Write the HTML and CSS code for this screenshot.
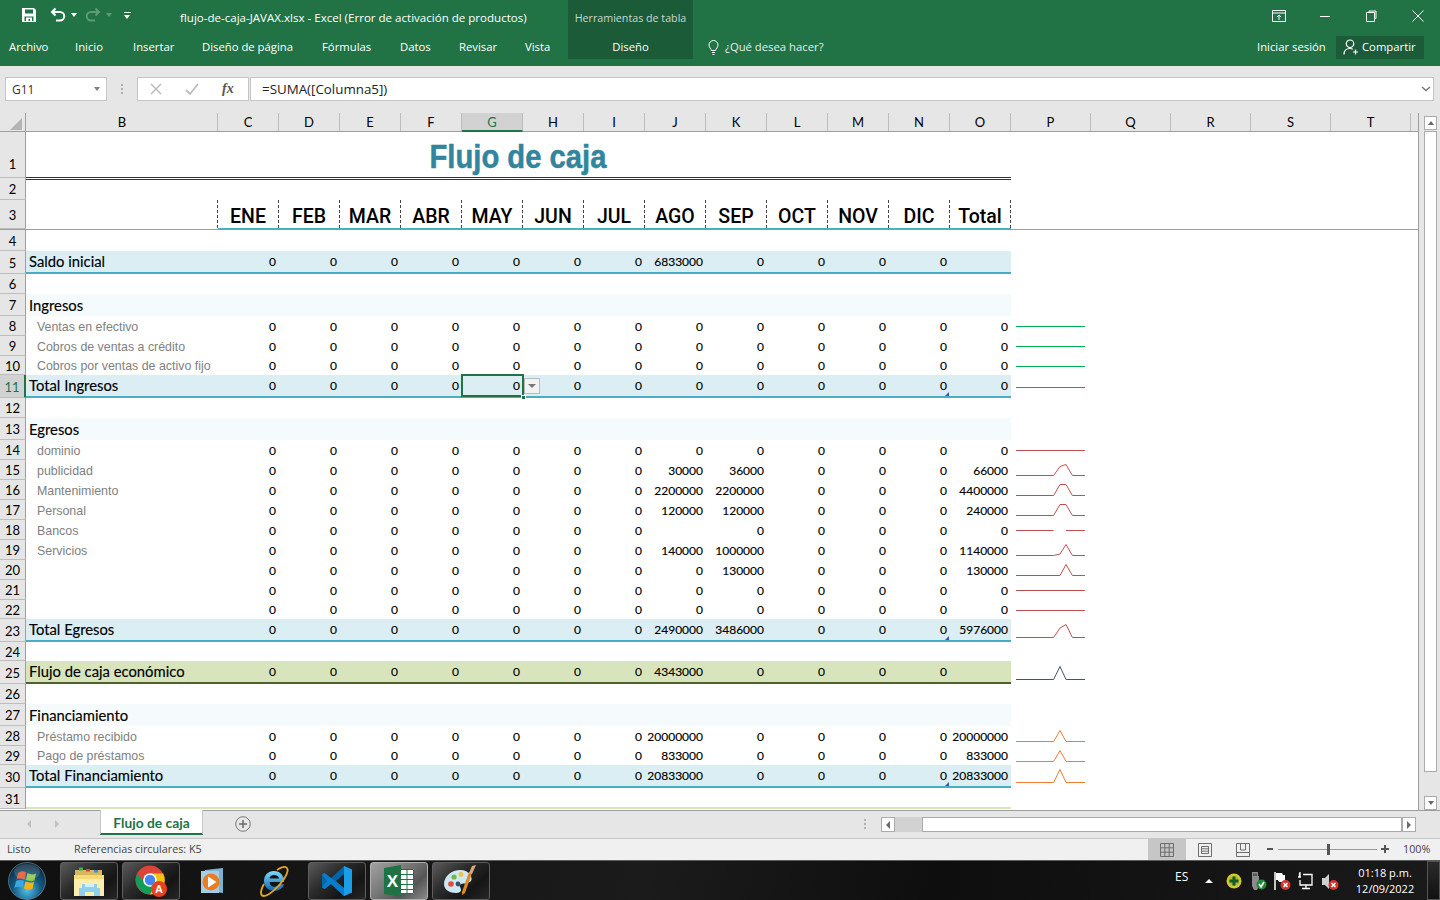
FILE: index.html
```html
<!DOCTYPE html>
<html lang="es">
<head>
<meta charset="utf-8">
<title>flujo-de-caja-JAVAX.xlsx - Excel</title>
<link rel="stylesheet" href="styles.css">
</head>
<body>
<header class="ribbon">
  <div class="contextual">
    <div class="ctx-title">Herramientas de tabla</div>
    <div class="ctx-tab">Diseño</div>
  </div>
  <div class="ribbon-top">
    <div class="qat">
      <svg class="i-save" width="16" height="16" viewBox="0 0 16 16"><path fill="#fff" fill-rule="evenodd" d="M1 1h12l2 2v12H1zM4 2.500v4h8v-4zM3.500 9.500v4.500h9V9.500z"/><path fill="#fff" d="M5 10.500h6v3.500H9v-2H7.500v2H5z"/></svg>
      <svg class="i-undo" width="16" height="16" viewBox="0 0 16 16"><path fill="none" stroke="#fff" stroke-width="2" d="M5.500 1.500 2 5l3.500 3.500M2.500 5H10a3.800 3.800 0 0 1 0 8.500H6"/></svg>
      <span class="tri"></span>
      <svg class="i-redo" width="16" height="16" viewBox="0 0 16 16"><path fill="none" stroke="#5f9b7a" stroke-width="2" d="M10.500 1.500 14 5l-3.500 3.500M13.500 5H6a3.800 3.800 0 0 0 0 8.500h4"/></svg>
      <span class="tri dim"></span>
      <span class="custom"></span>
    </div>
    <div class="doc-title">flujo-de-caja-JAVAX.xlsx - Excel (Error de activación de productos)</div>
    <div class="win">
      <svg width="14" height="12" viewBox="0 0 14 12"><path fill="none" stroke="#fff" d="M.5.500h13v11H.5zM.5 3h13M7 10V5M5 7l2-2 2 2"/></svg>
      <svg width="10" height="12" viewBox="0 0 10 12"><path stroke="#fff" d="M0 6.500h10"/></svg>
      <svg width="11" height="12" viewBox="0 0 11 12"><path fill="none" stroke="#fff" d="M3 2.500V1h7v7.500H8.500M.5 2.500h8v9h-8z"/></svg>
      <svg width="12" height="12" viewBox="0 0 12 12"><path stroke="#fff" d="m.5.500 11 11M11.500.500l-11 11"/></svg>
    </div>
  </div>
  <nav class="tabs">
    <span class="t-archivo">Archivo</span><span class="t-inicio">Inicio</span><span class="t-insertar">Insertar</span><span class="t-diseno">Diseño de página</span><span class="t-formulas">Fórmulas</span><span class="t-datos">Datos</span><span class="t-revisar">Revisar</span><span class="t-vista">Vista</span>
    <span class="tell">
      <svg width="11" height="15" viewBox="0 0 11 15"><path fill="none" stroke="#fff" d="M3.500 10.500C3 8.500 1 7.500 1 5a4.500 4.500 0 0 1 9 0c0 2.500-2 3.500-2.500 5.500zM4 12.500h3M4.500 14.500h2"/></svg>
      ¿Qué desea hacer?
    </span>
    <span class="signin">Iniciar sesión</span>
    <span class="share">
      <svg width="16" height="16" viewBox="0 0 16 16"><path fill="none" stroke="#fff" stroke-width="1.200" d="M7 1a3.300 3.300 0 0 1 0 7.500A3.300 3.300 0 0 1 7 1zM1 15.500c0-4 2.500-6 6-6 1 0 2 .2 2.800.7M12.500 10.500v5M10 13h5"/></svg>
      Compartir
    </span>
  </nav>
</header>

<section class="formula">
  <div class="namebox"><span>G11</span><span class="tri gray"></span></div>
  <div class="grip"></div>
  <div class="fxbox">
    <svg width="12" height="12" viewBox="0 0 12 12"><path stroke="#bdbdbd" stroke-width="1.500" d="m1 1 10 10M11 1 1 11"/></svg>
    <svg width="14" height="12" viewBox="0 0 14 12"><path fill="none" stroke="#bdbdbd" stroke-width="1.800" d="m1 7 4 4 8-10"/></svg>
    <span class="fx">fx</span>
  </div>
  <div class="fbar"><span>=SUMA([Columna5])</span><svg width="10" height="6" viewBox="0 0 10 6"><path fill="none" stroke="#777" stroke-width="1.500" d="m1 1 4 3.500L9 1"/></svg></div>
</section>

<section class="workbook">
  <div class="sheet">
    <div class="colhead">
      <div class="corner"><span></span></div>
      <span>B</span><span>C</span><span>D</span><span>E</span><span>F</span><span class="sel">G</span><span>H</span><span>I</span><span>J</span><span>K</span><span>L</span><span>M</span><span>N</span><span>O</span><span>P</span><span>Q</span><span>R</span><span>S</span><span>T</span>
    </div>

    <div class="row h46"><div class="rh low">1</div><div class="title-cell"><span class="title">Flujo de caja</span></div></div>
    <div class="row h22"><div class="rh">2</div><div class="under-title"></div></div>
    <div class="row r3"><div class="rh low">3</div>
      <div class="months"><span></span><span>ENE</span><span>FEB</span><span>MAR</span><span>ABR</span><span>MAY</span><span>JUN</span><span>JUL</span><span>AGO</span><span>SEP</span><span>OCT</span><span>NOV</span><span>DIC</span><span>Total</span></div>
    </div>
    <div class="row h21"><div class="rh">4</div></div>
    <div class="row h23"><div class="rh">5</div>
      <div class="fill total"><b>Saldo inicial</b><span>0</span><span>0</span><span>0</span><span>0</span><span>0</span><span>0</span><span>0</span><span>6833000</span><span>0</span><span>0</span><span>0</span><span>0</span><span></span></div>
    </div>
    <div class="row h20"><div class="rh">6</div></div>
    <div class="row h22"><div class="rh">7</div><div class="fill section"><b>Ingresos</b></div></div>
    <div class="row h20"><div class="rh">8</div>
      <div class="fill"><em>Ventas en efectivo</em><span>0</span><span>0</span><span>0</span><span>0</span><span>0</span><span>0</span><span>0</span><span>0</span><span>0</span><span>0</span><span>0</span><span>0</span><span>0</span></div>
      <svg class="spark green" viewBox="0 0 69 20"><path d="M0 10.500H69"/></svg>
    </div>
    <div class="row h20"><div class="rh">9</div>
      <div class="fill"><em>Cobros de ventas a crédito</em><span>0</span><span>0</span><span>0</span><span>0</span><span>0</span><span>0</span><span>0</span><span>0</span><span>0</span><span>0</span><span>0</span><span>0</span><span>0</span></div>
      <svg class="spark green" viewBox="0 0 69 20"><path d="M0 10.500H69"/></svg>
    </div>
    <div class="row h19"><div class="rh">10</div>
      <div class="fill"><em>Cobros por ventas de activo fijo</em><span>0</span><span>0</span><span>0</span><span>0</span><span>0</span><span>0</span><span>0</span><span>0</span><span>0</span><span>0</span><span>0</span><span>0</span><span>0</span></div>
      <svg class="spark green" viewBox="0 0 69 19"><path d="M0 10.500H69"/></svg>
    </div>
    <div class="row h23"><div class="rh rsel">11</div>
      <div class="fill total"><b>Total Ingresos</b><span>0</span><span>0</span><span>0</span><span>0</span><span class="active">0<i class="selbox"></i><i class="handle"></i><i class="ddbtn"></i></span><span>0</span><span>0</span><span>0</span><span>0</span><span>0</span><span>0</span><span class="flagged">0</span><span>0</span></div>
      <svg class="spark green" viewBox="0 0 69 23"><path d="M0 12.500H69"/></svg>
    </div>
    <div class="row h20"><div class="rh">12</div></div>
    <div class="row h22"><div class="rh">13</div><div class="fill section"><b>Egresos</b></div></div>
    <div class="row h20"><div class="rh">14</div>
      <div class="fill"><em>dominio</em><span>0</span><span>0</span><span>0</span><span>0</span><span>0</span><span>0</span><span>0</span><span>0</span><span>0</span><span>0</span><span>0</span><span>0</span><span>0</span></div>
      <svg class="spark red" viewBox="0 0 69 20"><path d="M0 10.500H69"/></svg>
    </div>
    <div class="row h20"><div class="rh">15</div>
      <div class="fill"><em>publicidad</em><span>0</span><span>0</span><span>0</span><span>0</span><span>0</span><span>0</span><span>0</span><span>30000</span><span>36000</span><span>0</span><span>0</span><span>0</span><span>66000</span></div>
      <svg class="spark red" viewBox="0 0 69 20"><path d="M0 15.500H37.600L44 6.500 50 4.500 56.400 15.500H69"/></svg>
    </div>
    <div class="row h20"><div class="rh">16</div>
      <div class="fill"><em>Mantenimiento</em><span>0</span><span>0</span><span>0</span><span>0</span><span>0</span><span>0</span><span>0</span><span>2200000</span><span>2200000</span><span>0</span><span>0</span><span>0</span><span>4400000</span></div>
      <svg class="spark red" viewBox="0 0 69 20"><path d="M0 15.500H37.600L44 4.500H50L56.400 15.500H69"/></svg>
    </div>
    <div class="row h20"><div class="rh">17</div>
      <div class="fill"><em>Personal</em><span>0</span><span>0</span><span>0</span><span>0</span><span>0</span><span>0</span><span>0</span><span>120000</span><span>120000</span><span>0</span><span>0</span><span>0</span><span>240000</span></div>
      <svg class="spark red" viewBox="0 0 69 20"><path d="M0 15.500H37.600L44 4.500H50L56.400 15.500H69"/></svg>
    </div>
    <div class="row h20"><div class="rh">18</div>
      <div class="fill"><em>Bancos</em><span>0</span><span>0</span><span>0</span><span>0</span><span>0</span><span>0</span><span>0</span><span></span><span>0</span><span>0</span><span>0</span><span>0</span><span>0</span></div>
      <svg class="spark red" viewBox="0 0 69 20"><path d="M0 10.500H37.600M50 10.500H69"/></svg>
    </div>
    <div class="row h20"><div class="rh">19</div>
      <div class="fill"><em>Servicios</em><span>0</span><span>0</span><span>0</span><span>0</span><span>0</span><span>0</span><span>0</span><span>140000</span><span>1000000</span><span>0</span><span>0</span><span>0</span><span>1140000</span></div>
      <svg class="spark red" viewBox="0 0 69 20"><path d="M0 15.500H37.600L44 14 50 4.500 56.400 15.500H69"/></svg>
    </div>
    <div class="row h20"><div class="rh">20</div>
      <div class="fill"><em></em><span>0</span><span>0</span><span>0</span><span>0</span><span>0</span><span>0</span><span>0</span><span>0</span><span>130000</span><span>0</span><span>0</span><span>0</span><span>130000</span></div>
      <svg class="spark red" viewBox="0 0 69 20"><path d="M0 15.500H44L50 4.500 56.400 15.500H69"/></svg>
    </div>
    <div class="row h20"><div class="rh">21</div>
      <div class="fill"><em></em><span>0</span><span>0</span><span>0</span><span>0</span><span>0</span><span>0</span><span>0</span><span>0</span><span>0</span><span>0</span><span>0</span><span>0</span><span>0</span></div>
      <svg class="spark red" viewBox="0 0 69 20"><path d="M0 10.500H69"/></svg>
    </div>
    <div class="row h19"><div class="rh">22</div>
      <div class="fill"><em></em><span>0</span><span>0</span><span>0</span><span>0</span><span>0</span><span>0</span><span>0</span><span>0</span><span>0</span><span>0</span><span>0</span><span>0</span><span>0</span></div>
      <svg class="spark red" viewBox="0 0 69 19"><path d="M0 10.500H69"/></svg>
    </div>
    <div class="row h23"><div class="rh">23</div>
      <div class="fill total"><b>Total Egresos</b><span>0</span><span>0</span><span>0</span><span>0</span><span>0</span><span>0</span><span>0</span><span>2490000</span><span>3486000</span><span>0</span><span>0</span><span class="flagged">0</span><span>5976000</span></div>
      <svg class="spark red" viewBox="0 0 69 23"><path d="M0 18.500H37.600L44 9 50 5.500 56.400 18.500H69"/></svg>
    </div>
    <div class="row h19"><div class="rh">24</div></div>
    <div class="row h23"><div class="rh">25</div>
      <div class="fill net"><b>Flujo de caja económico</b><span>0</span><span>0</span><span>0</span><span>0</span><span>0</span><span>0</span><span>0</span><span>4343000</span><span>0</span><span>0</span><span>0</span><span>0</span><span></span></div>
      <svg class="spark navy" viewBox="0 0 69 23"><path d="M0 18.500H37.600L44 5.500 50 18.500H69"/></svg>
    </div>
    <div class="row h20"><div class="rh">26</div></div>
    <div class="row h22"><div class="rh">27</div><div class="fill section"><b>Financiamiento</b></div></div>
    <div class="row h20"><div class="rh">28</div>
      <div class="fill"><em>Préstamo recibido</em><span>0</span><span>0</span><span>0</span><span>0</span><span>0</span><span>0</span><span>0</span><span>20000000</span><span>0</span><span>0</span><span>0</span><span>0</span><span>20000000</span></div>
      <svg class="spark orange" viewBox="0 0 69 20"><path d="M0 15.500H37.600L44 4.500 50 15.500H69"/></svg>
    </div>
    <div class="row h19"><div class="rh">29</div>
      <div class="fill"><em>Pago de préstamos</em><span>0</span><span>0</span><span>0</span><span>0</span><span>0</span><span>0</span><span>0</span><span>833000</span><span>0</span><span>0</span><span>0</span><span>0</span><span>833000</span></div>
      <svg class="spark orange" viewBox="0 0 69 19"><path d="M0 15.500H37.600L44 4.500 50 15.500H69"/></svg>
    </div>
    <div class="row h23"><div class="rh">30</div>
      <div class="fill total"><b>Total Financiamiento</b><span>0</span><span>0</span><span>0</span><span>0</span><span>0</span><span>0</span><span>0</span><span>20833000</span><span>0</span><span>0</span><span>0</span><span class="flagged">0</span><span>20833000</span></div>
      <svg class="spark orange" viewBox="0 0 69 23"><path d="M0 17.500H37.600L44 4.500 50 17.500H69"/></svg>
    </div>
    <div class="row h21"><div class="rh">31</div><div class="next-band"></div></div>
  </div>
  <aside class="vscroll">
    <span class="sbtn"><i class="up"></i></span>
    <span class="vthumb"></span>
    <span class="sbtn"><i class="down"></i></span>
  </aside>
</section>

<section class="sheetbar">
  <div class="nav"><i class="navl"></i><i class="navr"></i></div>
  <div class="sheet-tab">Flujo de caja</div>
  <svg class="add" width="16" height="16" viewBox="0 0 16 16"><circle cx="8" cy="8" r="7.300" fill="none" stroke="#7a7a7a"/><path stroke="#6a6a6a" stroke-width="1.500" d="M8 4v8M4 8h8"/></svg>
  <div class="grip small"></div>
  <div class="hscroll">
    <span class="hbtn"><i class="lft"></i></span>
    <span class="htrack"></span>
    <span class="hthumb"></span>
    <span class="hbtn"><i class="rgt"></i></span>
  </div>
</section>

<footer class="status">
  <span class="st-ready">Listo</span>
  <span class="st-ref">Referencias circulares: K5</span>
  <div class="views">
    <span class="view on"><svg width="14" height="14" viewBox="0 0 14 14"><path fill="none" stroke="#6e6e6e" d="M.5.500h13v13H.5zM.5 4.800h13M.5 9.200h13M4.800.500v13M9.200.500v13"/></svg></span>
    <span class="view"><svg width="14" height="14" viewBox="0 0 14 14"><path fill="none" stroke="#6e6e6e" d="M.5.500h13v13H.5zM3.500 3.500h7v7h-7zM3.500 5.800h7M3.500 8.200h7"/></svg></span>
    <span class="view"><svg width="14" height="14" viewBox="0 0 14 14"><path fill="none" stroke="#6e6e6e" d="M.5.500h13v13H.5zM.5 9.500h13M4.500.500v6.500h5V.500"/></svg></span>
  </div>
  <div class="zoomctl"><i class="minus"></i><span class="zline"><i class="zthumb"></i></span><i class="plus"></i></div>
  <span class="zpct">100%</span>
</footer>

<footer class="taskbar">
  <svg class="orb" width="38" height="38" viewBox="0 0 38 38">
    <defs>
      <radialGradient id="orbg" cx=".5" cy=".75" r=".7"><stop offset="0" stop-color="#4fc1e8"/><stop offset=".55" stop-color="#14577f"/><stop offset="1" stop-color="#0b2a3f"/></radialGradient>
    </defs>
    <circle cx="19" cy="19" r="18.500" fill="url(#orbg)" stroke="#89b6c9" stroke-opacity=".5"/>
    <path fill="#e8522a" d="M10 11q4-3 8-.5l-1.500 7q-4-2-8 0z"/>
    <path fill="#8cc63f" d="M19.500 11q4 2.500 8.500.5l-1.500 7q-4 1.500-8.500-.5z"/>
    <path fill="#3aa8e0" d="M8 19q4-2 8 0l-1.500 7q-4-2.500-8 0z"/>
    <path fill="#f7b21b" d="M17.500 19.500q4 2 8.500.5l-1.500 7q-4 1.500-8.500-.5z"/>
    <ellipse cx="19" cy="10" rx="13" ry="8" fill="#fff" fill-opacity=".14"/>
  </svg>
  <div class="slot"><span class="tbtn">
    <svg width="34" height="34" viewBox="0 0 34 34"><path fill="#d9b75c" d="M3 6h27v5H3z"/><rect x="7" y="3.500" width="4" height="3" fill="#35b24a"/><rect x="14" y="5" width="4" height="2.500" fill="#d94141"/><rect x="22" y="6" width="4" height="2.500" fill="#3d8edb"/><path fill="#fdeeae" d="M2 11h30v21H2z"/><path fill="#f7d978" d="M2 11h30v4H2z"/><path fill="#8ed0ef" d="M10 20h15v4h3v8h-6v-4h-9v4H7v-8h3z"/><path fill="#d5f1fb" d="M13 20h9v3h-9z"/></svg>
  </span></div>
  <div class="slot"><span class="tbtn">
    <svg width="34" height="34" viewBox="0 0 34 34"><circle cx="16" cy="16" r="14.500" fill="#db4437"/><path fill="#0f9d58" d="M3.300 9.500A14.500 14.500 0 0 0 16 30.500l6-12-10 2z"/><path fill="#f4c20d" d="M16 9.500h13.200A14.500 14.500 0 0 1 16 30.500l6-13z"/><circle cx="16" cy="16" r="6.800" fill="#fff"/><circle cx="16" cy="16" r="5.200" fill="#4285f4"/><circle cx="25" cy="25" r="8" fill="#e8411e"/><text class="badge-a" x="25" y="29">A</text></svg>
  </span></div>
  <div class="slot">
    <svg width="30" height="30" viewBox="0 0 30 30"><path fill="#7fb1d0" d="M8 4l18-2v25L8 25z"/><path fill="#a7cde3" d="M4 5h18v22H4z"/><circle cx="14" cy="16" r="8.500" fill="#ea7d21"/><path fill="#fff" d="M11 10.500 19.500 16 11 21.500z"/></svg>
  </div>
  <div class="slot slot-ie">
    <svg width="34" height="34" viewBox="0 0 34 34"><defs><linearGradient id="ieg" x1="0" y1="0" x2="0" y2="1"><stop offset="0" stop-color="#7fdcf7"/><stop offset="1" stop-color="#0e66b8"/></linearGradient></defs><path fill="url(#ieg)" d="M17 7a10 10 0 0 1 10 11H12.500c.2 3 2.200 4.800 5 4.800 2 0 3.500-1 4.200-2.500H27c-1.500 4-5 6.700-9.500 6.700C11.500 27 7 22.700 7 17S11 7 17 7zm0 4c-2.500 0-4.200 1.500-4.500 3.500H22c-.2-2-2.300-3.500-5-3.500z"/><path fill="none" stroke="#e3a81f" stroke-width="1.800" d="M7 20C3 27 3 32 7 32c4 0 14-8 20-17 4-6 5-11 1.500-12C26 2.500 23 4 20 6"/></svg>
  </div>
  <div class="slot"><span class="tbtn">
    <svg width="32" height="34" viewBox="0 0 32 34"><path fill="#0065a9" d="M23 2 10 14 3.500 9 1 10.500v13L3.500 25 10 20l13 12 8-3.500V5.500zm0 8v14l-8-7z"/><path fill="#1a9ee8" d="M23 2l8 3.500v23L23 32z"/><path fill="#0a7cc9" d="M1 10.500 3.500 9 23 24v8l-13-12-6.500 5L1 23.500 6 17z"/></svg>
  </span></div>
  <div class="slot"><span class="tbtn bright">
    <svg width="32" height="34" viewBox="0 0 32 34"><path fill="#fff" d="M12 5h19v25H12z"/><path fill="none" stroke="#1f7244" d="M17.500 5.500h13v24h-13zM17.500 10.500h13M17.500 15.500h13M17.500 20.500h13M17.500 25.500h13M24 5.500v24"/><path fill="#1f7244" d="M1 4 18 1v32L1 30z"/><text class="badge-x" x="9.500" y="23">X</text></svg>
  </span></div>
  <div class="slot"><span class="tbtn">
    <svg width="36" height="34" viewBox="0 0 36 34"><path fill="#cfe6f3" d="M17 6C9 6 1 12 1 20c0 6 6 9 12 9 3 0 5-1 5-3 0-3-3-4 0-6 3-1 7 0 10-3 2-3-1-11-11-11z"/><circle cx="8" cy="20" r="2.800" fill="#e34b3a"/><circle cx="11" cy="13" r="2.600" fill="#6dbb45"/><circle cx="18" cy="10.500" r="2.400" fill="#f0c43b"/><circle cx="15" cy="20" r="2.400" fill="#34516b"/><path fill="#dd8a23" d="m19 31 3-2 7-20-3-1-7 20z"/><path fill="#d9a77e" d="m26 9 3 1 4-9-4 1z"/></svg>
  </span></div>
  <div class="tray">
    <span class="lang">ES</span>
    <span class="tray-up"></span>
    <svg class="ic16" width="16" height="16" viewBox="0 0 16 16"><circle cx="8" cy="8" r="7.500" fill="#d6c62b"/><circle cx="8" cy="8" r="5" fill="#9fbe2a"/><path stroke="#15592c" stroke-width="3" d="M8 3.500v9M3.500 8h9"/></svg>
    <svg width="18" height="20" viewBox="0 0 18 20"><path fill="#8b8b8b" d="M3 1h6v4h1v10l-2 4H5l-2-4V5z"/><path fill="#555" d="M4 2.500h4V5H4z"/><circle cx="12.500" cy="13.500" r="5" fill="#1f8b36"/><path fill="none" stroke="#fff" stroke-width="1.500" d="m10 13 2 3 3-5"/></svg>
    <svg width="18" height="20" viewBox="0 0 18 20"><path stroke="#fff" stroke-width="1.500" d="M2 1v18"/><path fill="#fff" d="M3 2h6l1 2h2v7H6L5 9H3z"/><circle cx="12.500" cy="14" r="5" fill="#d8302a"/><path stroke="#fff" stroke-width="1.500" d="m10.500 12 4 4M14.500 12l-4 4"/></svg>
    <svg width="18" height="20" viewBox="0 0 18 20"><path fill="none" stroke="#fff" stroke-width="1.300" d="M1 6h3M2.500 2v4M3 1v5M6 3.500h9v10.500H3V9M9 14v3M5 17.500h8"/></svg>
    <svg width="18" height="20" viewBox="0 0 18 20"><path fill="#cfcfcf" d="M1 7h3l4-4v15l-4-4H1z"/><circle cx="12.500" cy="14" r="5" fill="#d8302a"/><path stroke="#fff" stroke-width="1.500" d="m10.500 12 4 4M14.500 12l-4 4"/></svg>
    <div class="clock"><span>01:18 p.m.</span><span>12/09/2022</span></div>
    <span class="desk"></span>
  </div>
</footer>
</body>
</html>
```

FILE: styles.css
```css
* { box-sizing: border-box; }
html, body { margin: 0; padding: 0; }
body {
  width: 1440px; height: 900px; overflow: hidden;
  display: flex; flex-direction: column;
  font-family: "Open Sans", "Liberation Sans", sans-serif;
  background: #e6e6e6; color: #000;
}
i { font-style: normal; display: block; }
svg { display: block; flex: none; }

/* ribbon */
.ribbon { height: 66px; background: #217346; color: #fff; position: relative; flex: none; font-size: 11.300px; }
.contextual {
  position: absolute; left: 568px; top: 0; width: 125px; height: 59px;
  background: #1c5b38; text-align: center;
}
.ctx-title { font-size: 10.700px; color: #c9d8cf; line-height: 36px; }
.ctx-tab { line-height: 22px; margin-top: 0; }
.ribbon-top { height: 35px; display: flex; position: relative; }
.qat { position: absolute; left: 21px; top: 7px; display: flex; align-items: center; height: 16px; }
.i-undo { margin-left: 13px; }
.i-redo { margin-left: 8px; }
.tri { width: 0; height: 0; border-left: 3.500px solid transparent; border-right: 3.500px solid transparent; border-top: 4px solid #fff; margin-left: 5px; }
.tri.dim { border-top-color: #5f9b7a; }
.tri.gray { border-top-color: #808080; margin: 0; }
.custom { width: 7px; height: 7px; margin-left: 12px; border-top: 1px solid #fff; position: relative; }
.custom::after { content: ""; position: absolute; left: 0; top: 2px; border-left: 3.500px solid transparent; border-right: 3.500px solid transparent; border-top: 4px solid #fff; }
.doc-title { position: absolute; left: 180px; top: 9px; line-height: 17px; white-space: nowrap; font-size: 11.550px; }
.win { position: absolute; left: 1272px; top: 10px; display: flex; align-items: center; }
.win svg:nth-child(2) { margin-left: 34px; }
.win svg:nth-child(3) { margin-left: 36px; }
.win svg:nth-child(4) { margin-left: 35px; }
.tabs { position: relative; height: 24px; display: flex; align-items: center; padding-left: 9px; white-space: nowrap; }
.tabs > span { display: block; flex: none; line-height: 24px; }
.t-archivo { width: 66px; }
.t-inicio { width: 58px; }
.t-insertar { width: 69px; }
.t-diseno { width: 120px; }
.t-formulas { width: 78px; }
.t-datos { width: 59px; }
.t-revisar { width: 66px; }
.t-vista { width: 183px; }
.tabs > .tell { display: flex; align-items: center; gap: 6px; width: 549px; color: #e4eee8; }
.tabs > .signin { width: 79px; }
.tabs > .share { width: 88px; height: 23px; background: #1c5b38; display: flex; align-items: center; gap: 3px; padding-left: 7px; }

/* formula bar */
.formula { height: 47px; flex: none; display: flex; align-items: flex-start; padding: 11px 6px 0 5px; font-size: 13px; }
.namebox { width: 102px; height: 24px; background: #fff; border: 1px solid #c6c6c6; display: flex; justify-content: space-between; align-items: center; padding: 0 6px; font-family: "Open Sans", sans-serif; font-size: 12px; color: #333; }
.grip { width: 2px; height: 10px; margin: 7px 14px 0 14px; border-left: 2px dotted #b0b0b0; }
.fxbox { width: 112px; height: 24px; background: #fff; border: 1px solid #c6c6c6; display: flex; align-items: center; gap: 23px; padding-left: 12px; }
.fx { font-family: "Liberation Serif", serif; font-style: italic; font-weight: 700; font-size: 14px; color: #555; }
.fbar { flex: 1; margin-left: 1px; height: 24px; background: #fff; border: 1px solid #c6c6c6; display: flex; justify-content: space-between; align-items: center; padding: 0 2px 0 11px; font-size: 13.350px; color: #222; }

/* sheet */
.workbook { height: 697px; flex: none; display: flex; }
.sheet { width: 1419px; background: #fff; border-right: 1px solid #9e9e9e; font-family: "Lato", sans-serif; font-size: 12px; overflow: hidden; }
.colhead {
  display: grid; grid-template-columns: 27px 191px repeat(13, 61px) repeat(5, 80px) 7px;
  height: 19px; background: #e6e6e6; border-bottom: 1px solid #9e9e9e; font-size: 13px;
}
.colhead > span { text-align: center; line-height: 18px; border-right: 1px solid #bdbdbd; height: 18px; }
.colhead > .sel { background: #d2d2d2; border-bottom: 2px solid #217346; color: #217346; height: 19px; }
.corner { width: 26px; border-right: 1px solid #9e9e9e; display: flex; justify-content: flex-end; align-items: flex-end; padding: 0 3px 2px 0; }
.corner span { width: 12px; height: 12px; background: #b4b4b4; clip-path: polygon(100% 0, 100% 100%, 0 100%); }

.row { display: flex; position: relative; }
.h19 { height: 19px; }
.h20 { height: 20px; }
.h21 { height: 21px; }
.h22 { height: 22px; }
.h23 { height: 23px; }
.h46 { height: 46px; }
.r3 { height: 30px; border-bottom: 1px solid #9e9e9e; }

.rh {
  width: 26px; flex: none; background: #e6e6e6; font-size: 13px; padding-top: 2px;
  border-right: 1px solid #9e9e9e; border-bottom: 1px solid #bdbdbd;
  display: flex; align-items: center; justify-content: center; line-height: 15px;
}
.rh.low { align-items: flex-end; padding: 0 0 5px; }
.rh.rsel { background: #d2d2d2; color: #217346; border-right: 2px solid #217346; }

.title-cell { width: 985px; padding-right: 2px; display: flex; justify-content: center; align-items: flex-end; border-bottom: 1px solid #333; }
.title {
  display: block; font-family: "Liberation Sans", sans-serif; font-weight: 700; font-size: 33px; line-height: 37px;
  color: #31859c; transform: scaleX(.885); white-space: nowrap; margin-bottom: 2px;
  -webkit-text-stroke: .5px #31859c;
}
.under-title { width: 985px; height: 1px; margin-top: 1px; background: #333; }

.months { width: 984px; margin-left: 1px; height: 30px; display: grid; grid-template-columns: 191px repeat(13, 61px); }
.months span {
  font-family: "Roboto", sans-serif; font-weight: 500; font-size: 19.500px; line-height: 24px;
  text-align: center; padding-top: 5px; height: 28px; white-space: nowrap;
  border-right: 1px dashed #444;
  box-shadow: 0 2px 0 #4bacc6;
}
.months span:first-child { box-shadow: none; }

.fill { width: 985px; display: grid; grid-template-columns: 191px repeat(13, 61px); align-items: center; flex: none; }
.fill b { font-weight: 400; font-size: 14.800px; line-height: 18px; margin-top: -1px; padding-left: 3px; white-space: nowrap; color: #000; -webkit-text-stroke: .15px #000; }
.fill em { font-style: normal; font-family: "Liberation Sans", sans-serif; font-size: 12.400px; color: #7f7f7f; padding: 1px 0 0 11px; white-space: nowrap; }
.fill span { text-align: right; padding-right: 2px; position: relative; line-height: 15px; -webkit-text-stroke: .15px #000; }
.total { background: #daeef3; border-bottom: 2px solid #4bacc6; }
.net { background: #d8e4bc; border-bottom: 2px solid #4f6228; }
.section { background: #f5fafd; }
.next-band { width: 985px; height: 2px; margin-top: 19px; background: #d8e4bc; }

.active { height: 15px; }
.selbox { position: absolute; left: 0; top: -4px; width: 63px; height: 23px; border: 2px solid #217346; }
.handle { position: absolute; left: 60px; top: 17px; width: 5px; height: 5px; background: #217346; border: 1px solid #fff; }
.ddbtn { position: absolute; left: 63px; top: 0; width: 16px; height: 16px; background: #f2f2f2; border: 1px solid #bbb; }
.ddbtn::after { content: ""; position: absolute; left: 3px; top: 5px; border-left: 4px solid transparent; border-right: 4px solid transparent; border-top: 4px solid #777; }
.flagged::after { content: ""; position: absolute; right: 0; bottom: -3px; width: 0; height: 0; border-left: 4px solid transparent; border-bottom: 4px solid #3f51b5; }

.spark { width: 69px; height: 100%; margin-left: 5px; fill: none; stroke-width: 1; }
.green { stroke: #00b050; }
.red { stroke: #c0504d; }
.navy { stroke: #44546a; }
.orange { stroke: #ed7d31; }

/* vertical scrollbar */
.vscroll { width: 21px; display: flex; flex-direction: column; align-items: center; padding: 3px 0 1px 2px; }
.sbtn { width: 13px; height: 14px; background: #fff; border: 1px solid #ababab; display: flex; align-items: center; justify-content: center; flex: none; }
.up, .down { width: 0; height: 0; border-left: 3.500px solid transparent; border-right: 3.500px solid transparent; }
.up { border-bottom: 4px solid #6a6a6a; }
.down { border-top: 4px solid #6a6a6a; }
.vthumb { width: 13px; height: 641px; background: #fff; border: 1px solid #ababab; margin: 1px 0 24px; flex: none; }

/* sheet bar */
.sheetbar { height: 28px; flex: none; border-top: 1px solid #9e9e9e; display: flex; position: relative; }
.nav { width: 100px; display: flex; padding: 9px 0 0 27px; gap: 24px; }
.navl, .navr { width: 0; height: 0; border-top: 4px solid transparent; border-bottom: 4px solid transparent; }
.navl { border-right: 4px solid #c0c0c0; }
.navr { border-left: 4px solid #c0c0c0; }
.sheet-tab {
  width: 103px; height: 25px; background: #fff; border-bottom: 2px solid #217346; border-left: 1px solid #c6c6c6; border-right: 1px solid #c6c6c6;
  margin-top: -1px; text-align: center; line-height: 25px; color: #217346; font-weight: 700; font-size: 13.800px; font-family: "Lato", sans-serif;
}
.add { margin: 5px 0 0 32px; }
.grip.small { margin: 8px 0 0 613px; }
.hscroll { display: flex; margin: 6px 0 0 15px; height: 15px; }
.hbtn { width: 14px; height: 15px; background: #fff; border: 1px solid #ababab; display: flex; align-items: center; justify-content: center; }
.lft, .rgt { width: 0; height: 0; border-top: 4px solid transparent; border-bottom: 4px solid transparent; }
.lft { border-right: 4px solid #6a6a6a; }
.rgt { border-left: 4px solid #6a6a6a; }
.htrack { width: 27px; background: #d2d2d2; }
.hthumb { width: 480px; background: #fff; border: 1px solid #ababab; }

/* status */
.status { height: 22px; flex: none; background: #f0f0f0; border-top: 1px solid #c6c6c6; display: flex; align-items: center; font-size: 10.750px; color: #444; position: relative; padding-bottom: 1px; }
.st-ready { margin-left: 7px; width: 67px; }
.st-ref { width: 1074px; }
.views { display: flex; height: 21px; margin-bottom: -1px; }
.view { width: 38px; display: flex; align-items: center; justify-content: center; }
.view.on { background: #c6c6c6; }
.zoomctl { display: flex; align-items: center; margin-left: 5px; width: 122px; }
.minus { width: 6px; height: 2px; background: #555; }
.plus { width: 8px; height: 8px; background: linear-gradient(#555, #555) center / 8px 2px no-repeat, linear-gradient(#555, #555) center / 2px 8px no-repeat; margin-left: 4px; }
.zline { width: 100px; height: 1px; background: #999; margin-left: 5px; position: relative; }
.zthumb { position: absolute; left: 49px; top: -5px; width: 3px; height: 11px; background: #555; }
.zpct { margin-left: 14px; }

/* taskbar */
.taskbar {
  height: 40px; flex: none; border-top: 1px solid #5c5c5c; display: flex; align-items: center; padding-left: 8px; position: relative;
  background: linear-gradient(100deg, #101010 0, #1b1b1b 45%, #0e0e0e 65%, #1a1a1a 100%); color: #fff;
}
.orb { margin-right: 14px; }
.slot { width: 62px; height: 38px; flex: none; display: flex; align-items: center; justify-content: flex-start; padding-left: 0; }
.slot > svg { margin-left: 13px; }
.slot-ie > svg { margin-left: 11px; }
.tbtn { width: 58px; height: 38px; border: 1px solid #5e5e5e; border-radius: 3px; display: flex; align-items: center; justify-content: center; background: linear-gradient(140deg, #5a5a5a 0, #2a2a2a 40%, #151515 70%, #262626 100%); }
.tbtn.bright { border-color: #b0b0b0; background: linear-gradient(140deg, #a2a2a2 0, #7a7a7a 40%, #565656 70%, #8a8a8a 100%); }
.badge-a { font: 700 11px "Liberation Sans", sans-serif; fill: #fff; text-anchor: middle; }
.badge-x { font: 700 17px "Liberation Sans", sans-serif; fill: #fff; text-anchor: middle; }
.tray { position: absolute; left: 1175px; top: 0; right: 0; height: 39px; display: flex; align-items: center; font-size: 12px; gap: 6px; }
.lang { width: 24px; margin-top: -8px; }
.tray-up { width: 0; height: 0; border-left: 4px solid transparent; border-right: 4px solid transparent; border-bottom: 4px solid #fff; margin: 0 6px 0 0; }
.ic16 { margin: 0 1px; }
.clock { display: flex; flex-direction: column; align-items: center; width: 72px; margin-left: 4px; line-height: 16px; font-size: 11px; }
.desk { position: absolute; right: 0; top: 0; width: 13px; height: 39px; border: 1px solid #555; background: linear-gradient(#2a2a2a, #111); }
```
